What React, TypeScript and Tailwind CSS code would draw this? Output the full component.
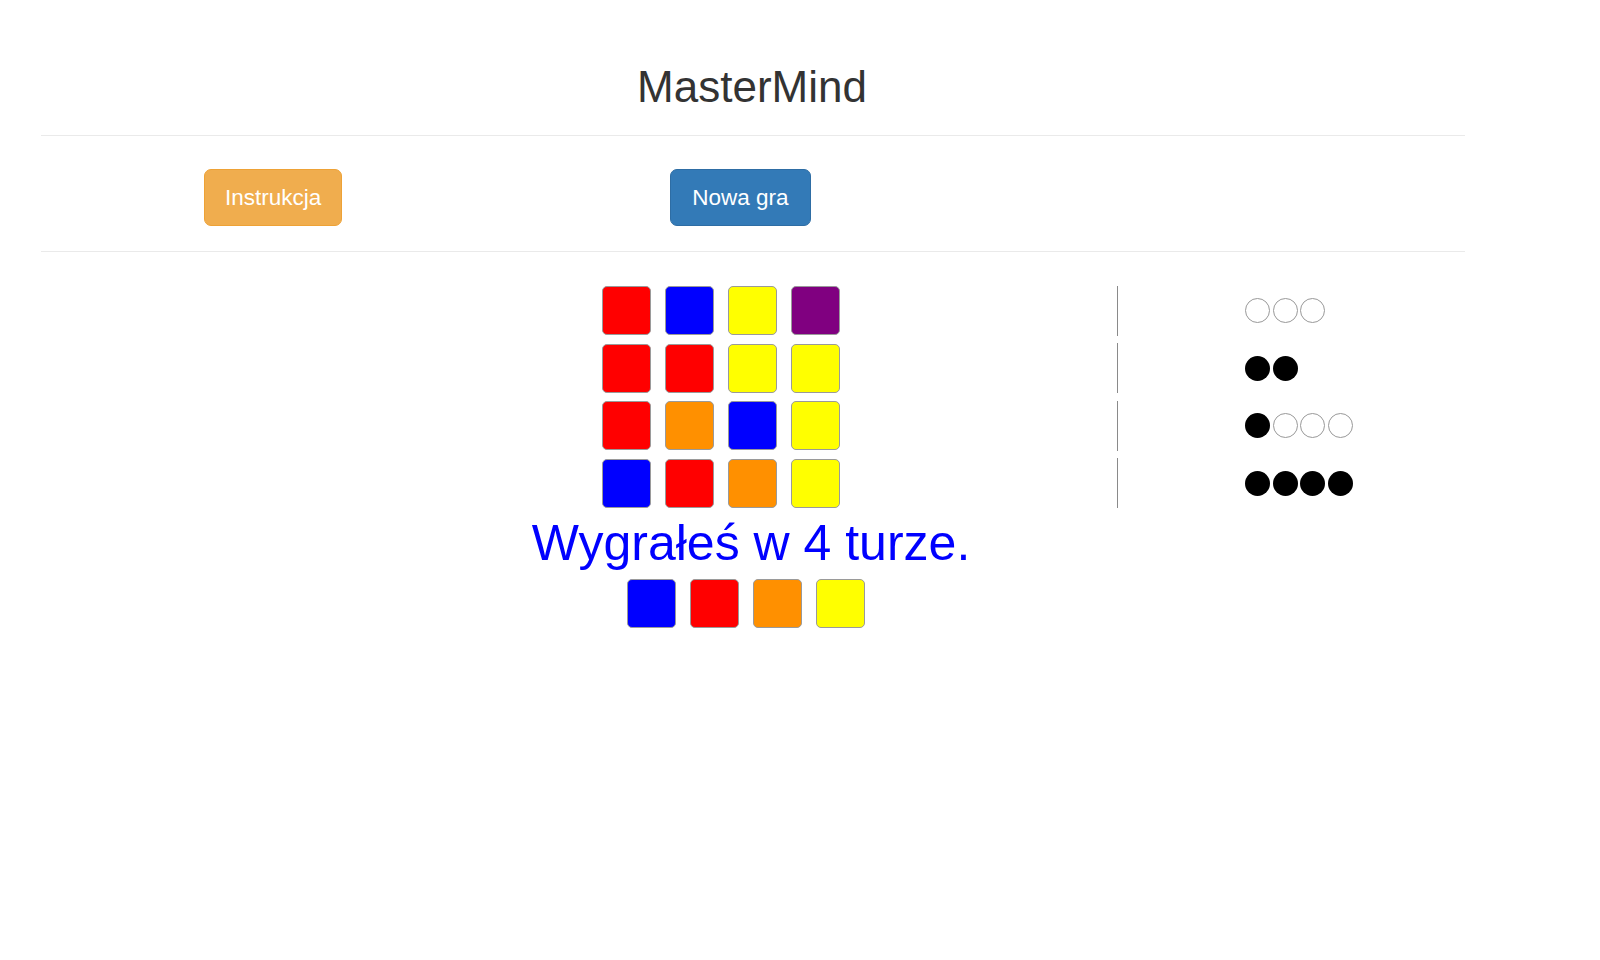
import React from 'react';

// colour codes used on the board
const COLORS: Record<string, string> = {
	r: 'bg-[#ff0000]',
	b: 'bg-[#0000ff]',
	y: 'bg-[#ffff00]',
	p: 'bg-[#800080]',
	o: 'bg-[#ff9000]',
};

const guesses: { code: string[]; pegs: ('black' | 'white')[] }[] = [
	{ code: ['r', 'b', 'y', 'p'], pegs: ['white', 'white', 'white'] },
	{ code: ['r', 'r', 'y', 'y'], pegs: ['black', 'black'] },
	{ code: ['r', 'o', 'b', 'y'], pegs: ['black', 'white', 'white', 'white'] },
	{ code: ['b', 'r', 'o', 'y'], pegs: ['black', 'black', 'black', 'black'] },
];

const solution = ['b', 'r', 'o', 'y'];

const Square = ({ color }: { color: string }) => (
	<div className={`w-[49px] h-[49px] rounded-[5px] border border-[#9a9a9a] ${COLORS[color]}`} />
);

const Peg = ({ kind }: { kind: 'black' | 'white' }) =>
	kind === 'black' ? (
		<div className="w-[25px] h-[25px] rounded-full bg-black" />
	) : (
		<div className="w-[25px] h-[25px] rounded-full bg-white border border-[#999]" />
	);

const App = () => {
	return (
		<div className="w-[1600px] h-[960px] bg-white text-[#333] font-['Liberation_Sans',Arial,sans-serif]">
			<div className="ml-[41px] w-[1424px]">
				<div className="pt-[63px]">
					<h1 className="text-center text-[44px] leading-[48px] pr-[2px]">MasterMind</h1>
				</div>
				<hr className="mt-[24px] border-t border-[#eaeaea]" />

				<div className="flex items-center mt-[33px]">
					<button className="ml-[163px] h-[57px] px-[20px] rounded-[7px] bg-[#f0ad4e] border border-[#eea236] text-white text-[22.5px]">
						Instrukcja
					</button>
					<button className="ml-[328px] h-[57px] px-[21px] rounded-[7px] bg-[#337ab7] border border-[#2e6da4] text-white text-[22.5px]">
						Nowa gra
					</button>
				</div>
				<hr className="mt-[25px] border-t border-[#eaeaea]" />

				<div className="mt-[34px] flex flex-col gap-[8.5px]">
					{guesses.map((g, i) => (
						<div key={i} className="flex items-center h-[49px]">
							<div className="ml-[561px] flex gap-[14px]">
								{g.code.map((c, j) => (
									<Square key={j} color={c} />
								))}
							</div>
							<div className="ml-[277px] w-px h-[50px] bg-[#8a8a8a]" />
							<div className="ml-[127px] flex gap-[2.5px]">
								{g.pegs.map((p, j) => (
									<Peg key={j} kind={p} />
								))}
							</div>
						</div>
					))}
				</div>

				<div className="mt-[8px] text-center pr-[4px]">
					<p className="text-[50px] leading-[55px] text-[#0000ff]">Wygrałeś w 4 turze.</p>
				</div>
				<div className="mt-[8px] flex gap-[14px] ml-[586px]">
					{solution.map((c, j) => (
						<Square key={j} color={c} />
					))}
				</div>
			</div>
		</div>
	);
};

export default App;
